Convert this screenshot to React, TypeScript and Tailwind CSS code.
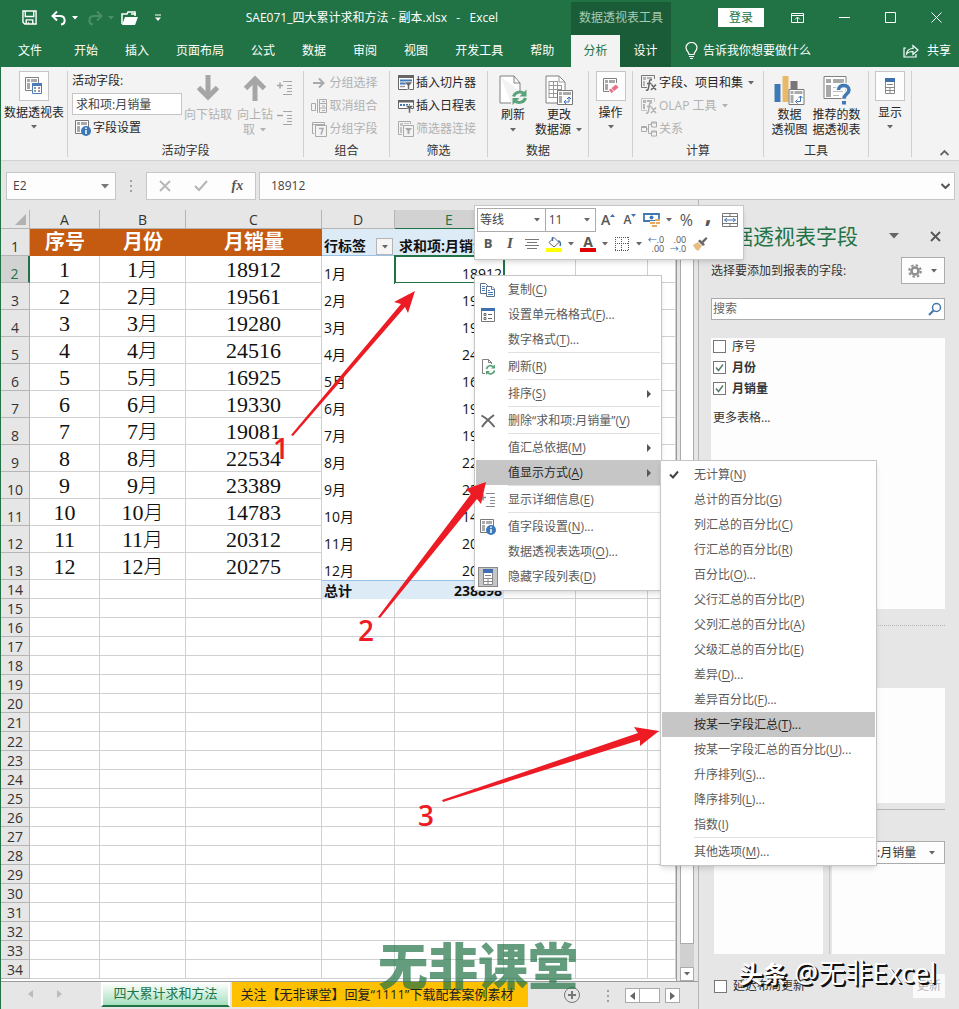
import type { ReactNode } from "react";
import { clsx } from "clsx";

type Entry = { label: string; hotkey: string; dots?: boolean; icon?: ReactNode; sub?: boolean; active?: boolean; sep?: boolean };

const tabs = ["开始", "插入", "页面布局", "公式", "数据", "审阅", "视图", "开发工具", "帮助"];

const sales = [18912, 19561, 19280, 24516, 16925, 19330, 19081, 22534, 23389, 14783, 20312, 20275];

const emptyRows = Array.from({ length: 20 }, (_, i) => i + 15);

const showAs: Entry[] = [
  { label: "无计算", hotkey: "N", icon: <TickIcon /> },
  { label: "总计的百分比", hotkey: "G" },
  { label: "列汇总的百分比", hotkey: "C" },
  { label: "行汇总的百分比", hotkey: "R" },
  { label: "百分比", hotkey: "O", dots: true },
  { label: "父行汇总的百分比", hotkey: "P" },
  { label: "父列汇总的百分比", hotkey: "A" },
  { label: "父级汇总的百分比", hotkey: "E" },
  { label: "差异", hotkey: "D", dots: true },
  { label: "差异百分比", hotkey: "F", dots: true },
  { label: "按某一字段汇总", hotkey: "T", dots: true, active: true },
  { label: "按某一字段汇总的百分比", hotkey: "U", dots: true },
  { label: "升序排列", hotkey: "S", dots: true },
  { label: "降序排列", hotkey: "L", dots: true },
  { label: "指数", hotkey: "I", sep: true },
  { label: "其他选项", hotkey: "M", dots: true },
];

const contextItems: Entry[] = [
  { label: "复制", hotkey: "C", icon: <CopyIcon /> },
  { label: "设置单元格格式", hotkey: "F", dots: true, icon: <FormatIcon /> },
  { label: "数字格式", hotkey: "T", dots: true, sep: true },
  { label: "刷新", hotkey: "R", icon: <RefreshSmallIcon />, sep: true },
  { label: "排序", hotkey: "S", sub: true, sep: true },
  { label: "删除“求和项:月销量”", hotkey: "V", icon: <DeleteIcon />, sep: true },
  { label: "值汇总依据", hotkey: "M", sub: true },
  { label: "值显示方式", hotkey: "A", sub: true, active: true, sep: true },
  { label: "显示详细信息", hotkey: "E", icon: <ExpandIcon color="#8a8a8a" sign="plus" />, sep: true },
  { label: "值字段设置", hotkey: "N", dots: true, icon: <FieldInfoIcon /> },
  { label: "数据透视表选项", hotkey: "O", dots: true },
  { label: "隐藏字段列表", hotkey: "D", icon: <ListBoxIcon /> },
];

function Caret({ className = "text-[#666]" }: { className?: string }) {
  return (
    <svg viewBox="0 0 8 4" className={clsx("h-1 w-2 shrink-0", className)}>
      <path d="M1 0h6L4 3.5z" fill="currentColor" />
    </svg>
  );
}

function TickIcon() {
  return (
    <svg viewBox="0 0 16 16" className="h-4 w-4">
      <path d="M4 7.5l3 3 5-6" fill="none" stroke="#444" strokeWidth="2" />
    </svg>
  );
}

function CopyIcon() {
  return (
    <svg viewBox="0 0 16 16" className="h-4 w-4" fill="#fff" stroke="#5b7088">
      <path d="M.5 1.5h5l2 2v8h-7z" />
      <path d="M2 4.5h3M2 6.5h3M2 8.5h3" stroke="#4a7ebb" />
      <path d="M6.5 4.5h5.500L14.500 7v7.500h-8z" />
      <path d="M11.500 4.500v3h3M8 8.500h2M8 10.500h5M8 12.500h5" stroke="#4a7ebb" />
    </svg>
  );
}

function FormatIcon() {
  return (
    <svg viewBox="0 0 16 16" className="h-4 w-4">
      <path d="M1.5 1.5h13v13h-13z" fill="#fff" stroke="#777" />
      <path d="M1 1h14v3H1z" fill="#3f6fae" />
      <path d="M4 6.5h2v2H4zM4 10.5h2v2H4z" fill="none" stroke="#666" />
      <path d="M8 7.5h4M8 11.5h4" stroke="#666" />
    </svg>
  );
}

function RefreshIcon() {
  return (
    <svg viewBox="0 0 28 30" className="h-[30px] w-7" fill="none">
      <path d="M1 1h14l6 7v8M12 28H1V1" fill="#fff" stroke="#808080" />
      <path d="M15 1v7h6" stroke="#808080" />
      <path d="M14.5 21.5a6.500 6 0 0 1 10.500-3" stroke="#5aa27c" strokeWidth="3" />
      <path d="M27.5 14.500v7h-7z" fill="#5aa27c" />
      <path d="M26.5 23a6.500 6 0 0 1-10.500 3" stroke="#5aa27c" strokeWidth="3" />
      <path d="M13.5 30v-7h7z" fill="#5aa27c" />
    </svg>
  );
}

function RefreshSmallIcon() {
  return (
    <svg viewBox="0 0 16 16" className="h-4 w-4" fill="none">
      <path d="M5 14.500H2.500V.500h6l3 3V5" stroke="#808080" />
      <path d="M8.500.500v3h3" stroke="#808080" />
      <path d="M6.500 10a4 4 0 0 1 7-2M14.500 11.500a4 4 0 0 1-7 2" stroke="#5aa27c" strokeWidth="1.800" />
      <path d="M15 5.500v4h-4zM6 16v-4h4z" fill="#5aa27c" />
    </svg>
  );
}

function DeleteIcon() {
  return (
    <svg viewBox="0 0 16 16" className="h-4 w-4">
      <path d="M1.5 2.500C6 5 11 9.500 14.500 14M14 2C10 5 5 9 2 14" fill="none" stroke="#666" strokeWidth="2" />
    </svg>
  );
}

function ExpandIcon({ color, sign }: { color: string; sign: "plus" | "minus" }) {
  return (
    <svg viewBox="0 0 16 16" className="h-4 w-4" stroke={color} fill="none">
      <path d="M6 1.5h9M10 5.5h5M10 8.5h5M10 11.5h5M6 14.5h9" />
      <path d={sign === "plus" ? "M0 5.5h6M3 2.5v6" : "M0 5.5h6"} strokeWidth="1.5" />
    </svg>
  );
}

function FieldInfoIcon() {
  return (
    <svg viewBox="0 0 16 16" className="h-4 w-4">
      <path d="M.5.5h13v13H.5z" fill="#fff" stroke="#777" />
      <path d="M2 2h3v3H2zM6 2h6v3H6zM2 6h3v6H2z" fill="#aaa" />
      <circle cx="11" cy="11" r="5" fill="#3a78b8" />
      <path d="M11 7.5V9M11 10v4" stroke="#fff" strokeWidth="1.5" />
    </svg>
  );
}

function ListIcon() {
  return (
    <svg viewBox="0 0 10 16" className="h-4 w-[10px]">
      <path d="M.5.5h9v15h-9z" fill="#fff" stroke="#888" />
      <path d="M0 0h10v4H0z" fill="#3f6fae" />
      <path d="M2 6.5h6M.5 9.5h9M.5 12.5h9M5 9.5v6" stroke="#888" />
    </svg>
  );
}

function ListBoxIcon() {
  return (
    <span className="flex h-5 w-5 shrink-0 items-center justify-center border border-[#8a8a8a] bg-[#c6c6c6]">
      <ListIcon />
    </span>
  );
}

function PivotIcon() {
  return (
    <svg viewBox="0 0 18 18" className="h-[18px] w-[18px]">
      <path d="M.5.5h13v13H.5z" fill="#fff" stroke="#808080" />
      <path d="M2 2h3v3H2zM6 2h6v3H6zM2 6h3v6H2z" fill="#a8a8a8" />
      <path d="M7.5 6.5h9v10h-9z" fill="#fff" stroke="#4a7ebb" />
      <path d="M7 6h10v3H7z" fill="#4a7ebb" />
      <path d="M9 11h2M13 11h2M9 14h2M13 14h2" stroke="#777" strokeWidth="1.5" />
    </svg>
  );
}

function EraseIcon() {
  return (
    <svg viewBox="0 0 18 18" className="h-[18px] w-[18px]">
      <path d="M14.5 6V1.5h-13v13H7" fill="#fff" stroke="#808080" />
      <path d="M3 3h3v3H3zM7 3h6v3H7zM3 7h3v6H3z" fill="#a8a8a8" />
      <path d="M6.5 13L14 7l3 3.5-7.5 6z" fill="#e8718a" stroke="#fff" strokeWidth=".8" />
      <path d="M9 11l3 3.5" stroke="#fff" strokeWidth=".8" />
    </svg>
  );
}

function BigArrow({ down }: { down?: boolean }) {
  return (
    <svg viewBox="0 0 22 26" className="h-[26px] w-[22px]" fill="none" stroke="#a6a6a6">
      {down ? (
        <>
          <path d="M11 0v22" strokeWidth="5" />
          <path d="M1.5 12.5L11 22l9.5-9.5" strokeWidth="5" />
        </>
      ) : (
        <>
          <path d="M11 4v22" strokeWidth="5" />
          <path d="M1.5 13.5L11 4l9.5 9.5" strokeWidth="5" />
        </>
      )}
    </svg>
  );
}

function SourceIcon() {
  return (
    <svg viewBox="0 0 28 30" className="h-[30px] w-7" fill="none">
      <path d="M1 1h13l6 6v21H1z" fill="#fff" stroke="#808080" />
      <path d="M14 1v6h6M4 6.5h8M4 10.5h13M4 14.5h13M4 18.5h9M4 22.5h8M4 6v17M8.5 6v17M12.5 6v17M16.5 10v5" stroke="#999" />
      <path d="M12.5 15.5h15v14h-15z" fill="#fff" stroke="#777" />
      <path d="M14 17h3v3h-3zM18 17h8v3h-8zM14 21h3v7h-3z" fill="#aaa" />
      <path d="M20 27h4v-5M22 24l2-2 2 2M21 25l-2 2 2 2" stroke="#3f6fae" />
    </svg>
  );
}

function ChartIcon() {
  return (
    <svg viewBox="0 0 31 30" className="h-[30px] w-8" fill="none">
      <path d="M1 9h6v18H1z" fill="#3f78b5" />
      <path d="M9 1h6v26H9z" fill="#e9b968" />
      <path d="M17 6h7v8h-7z" fill="#777" />
      <path d="M15.5 14.5h15v15h-15z" fill="#fff" stroke="#777" />
      <path d="M17 16h3v3h-3zM21 16h8v3h-8zM17 20h3v8h-3z" fill="#aaa" />
      <path d="M23 26.5h4V21M25 23l2-2 2 2M24 24.5l-2 2 2 2" stroke="#3f6fae" />
    </svg>
  );
}

function RecommendIcon() {
  return (
    <svg viewBox="0 0 28 30" className="h-[30px] w-7" fill="none">
      <path d="M1 1.5h22v22H1z" fill="#fff" stroke="#808080" />
      <path d="M3 4h5v4H3zM10 4h11v4H10zM3 10h5v12H3z" fill="#a8a8a8" />
      <path d="M10 12.5h10M10 16.5h10M10 20.5h6" stroke="#bbb" />
      <path d="M15.5 15c0-6 10.5-6 10.5 0 0 4-5 4-5 8.5" stroke="#f3f3f3" strokeWidth="6" />
      <path d="M15.5 15c0-6 10.5-6 10.5 0 0 4-5 4-5 8.5" stroke="#3f78b5" strokeWidth="3.5" />
      <path d="M19 26h4v3.5h-4z" fill="#3f78b5" />
    </svg>
  );
}

function GroupArrowIcon() {
  return (
    <svg viewBox="0 0 16 16" className="h-4 w-4" fill="none" stroke="#aaa">
      <path d="M2 8h10M8 3.5L12.5 8 8 12.5" strokeWidth="2" />
    </svg>
  );
}

function UngroupIcon() {
  return (
    <svg viewBox="0 0 16 16" className="h-4 w-4" fill="none" stroke="#aaa">
      <path d="M.5 5.5h4v7h-4zM8.5 1.5h7v13h-7zM8.5 5.5h7M8.5 10h7M11 3.5h3M11 8h3M11 12.5h3M6.5 1v14" />
    </svg>
  );
}

function GroupFieldIcon() {
  return (
    <svg viewBox="0 0 16 16" className="h-4 w-4" fill="none" stroke="#aaa">
      <path d="M3 12.5H1.5v-11h12V4M1 3.5h12" />
      <path d="M4.5 4.5h11v11h-11z" fill="#f3f3f3" />
      <path d="M8 7.5h4l-2 6" strokeWidth="1.5" />
    </svg>
  );
}

function SlicerIcon() {
  return (
    <svg viewBox="0 0 16 16" className="h-4 w-4">
      <path d="M.5.5h15v14H.5z" fill="#fff" stroke="#666" />
      <path d="M0 0h16v3H0z" fill="#666" />
      <path d="M2 5.5h12M2 8.5h6" stroke="#3f78b5" strokeWidth="2" />
      <path d="M2 11.5h5" stroke="#999" strokeWidth="1.5" />
      <path d="M6.5 7h8l-3 3.5v4h-2v-4z" fill="#666" stroke="#fff" strokeWidth=".5" />
    </svg>
  );
}

function TimelineIcon() {
  return (
    <svg viewBox="0 0 16 16" className="h-4 w-4">
      <path d="M.5 2.5h15v8H.5z" fill="#fff" stroke="#666" />
      <path d="M0 2h16v2.5H0z" fill="#666" />
      <path d="M2 7h10" stroke="#3f78b5" strokeWidth="2" strokeDasharray="2 1" />
      <path d="M7.5 7.5h8l-3 3.5v4h-2v-4z" fill="#666" stroke="#f3f3f3" strokeWidth=".5" />
    </svg>
  );
}

function FilterLinkIcon() {
  return (
    <svg viewBox="0 0 16 16" className="h-4 w-4" fill="none" stroke="#aaa">
      <path d="M4 13.5H.5V.5h12V3" />
      <path d="M2 2h3v3H2zM6 2h5v1H6zM2 6h2v6H2z" fill="#c4c4c4" stroke="none" />
      <path d="M5.5 4.5h10v11h-10z" fill="#f3f3f3" />
      <path d="M7 7h7l-2.5 3v3h-2v-3z" fill="#aaa" stroke="none" />
    </svg>
  );
}

function FxIcon({ dim }: { dim?: boolean }) {
  return (
    <svg viewBox="0 0 16 16" className="h-4 w-4" fill="none" stroke={dim ? "#b0b0b0" : "#666"}>
      <path d="M6 12.5H.5V.5h13V4" stroke={dim ? "#c4c4c4" : "#777"} />
      <path d="M2 2h3v3H2zM6 2h5v2H6zM2 6h2v5H2z" fill="#b5b5b5" stroke="none" />
      <path d="M11 5c-3-1-2.5 2-3 5s-.5 6-3 5M6 8.5h4.5M10.5 9.5L15 15M15 9.5L10 15" strokeWidth="1.5" />
    </svg>
  );
}

function RelationIcon() {
  return (
    <svg viewBox="0 0 16 16" className="h-4 w-4" fill="none" stroke="#aaa">
      <path d="M.5 5.5h5v5h-5zM10.5 1h5v5h-5zM10.5 10h5v5h-5zM5.5 8h2M10.5 3.5h-3v9h3" />
      <path d="M.5 6.5h5M10.5 2h5M10.5 11h5" />
    </svg>
  );
}

function RibbonGroup({ label, className, children }: { label?: string; className: string; children: ReactNode }) {
  return (
    <section className={clsx("flex h-[86px] shrink-0 flex-col border-r border-[#d0d0d0]", className)}>
      <div className="flex h-[72px] justify-center">{children}</div>
      <h2 className="h-[14px] text-center leading-4 text-[#333]">{label}</h2>
    </section>
  );
}

function BoxedButton({ label, icon }: { label: string; icon: ReactNode }) {
  return (
    <button className="flex flex-col items-center whitespace-nowrap">
      <span className="flex h-[30px] w-[30px] items-center justify-center border border-[#c6c6c6] bg-[#fdfdfd]">{icon}</span>
      <span className="mt-1 leading-4">{label}</span>
      <Caret className="mt-1 text-[#666]" />
    </button>
  );
}

function LineButton({ label, icon, dim, caret }: { label: string; icon: ReactNode; dim?: boolean; caret?: boolean }) {
  return (
    <button className={clsx("flex h-[23px] items-center gap-[2px] whitespace-nowrap", dim ? "text-[#b1b1b1]" : "text-[#262626]")}>
      {icon}
      {label}
      {caret && <Caret className={dim ? "ml-[2px] text-[#b1b1b1]" : "ml-[2px] text-[#666]"} />}
    </button>
  );
}

function TallButton({ lines, icon, dim, caret, below }: { lines: string[]; icon: ReactNode; dim?: boolean; caret?: boolean; below?: boolean }) {
  return (
    <button className={clsx("flex flex-col items-center whitespace-nowrap pt-1", dim && "text-[#b1b1b1]")}>
      <span className="flex h-8 items-start">{icon}</span>
      {lines.map((line, i) => (
        <span key={line} className="flex items-center gap-1 leading-[15px]">
          {line}
          {caret && i === lines.length - 1 && <Caret className={dim ? "text-[#b1b1b1]" : "text-[#666]"} />}
        </span>
      ))}
      {below && <Caret className="mt-[6px] text-[#666]" />}
    </button>
  );
}

function Header() {
  return (
    <header className="flex h-[67px] shrink-0 bg-[#217346] text-white">
      <div className="flex w-[571px] shrink-0 flex-col">
        <div className="flex h-[35px] items-center pl-[22px]">
          <button aria-label="保存">
            <svg viewBox="0 0 16 16" className="h-[15px] w-[15px]" fill="none" stroke="#fff" strokeWidth="1.5">
              <path d="M1 1h14v14H3l-2-2zM3.5 1v6h9V1M4.5 15v-4.5h7V15M7 13v2" />
            </svg>
          </button>
          <button aria-label="撤消" className="ml-[14px] flex items-center gap-1">
            <svg viewBox="0 0 16 16" className="h-4 w-4" fill="none" stroke="#fff" strokeWidth="2">
              <path d="M6 1.5L1.5 6 6 10.5M2 6h7c6 0 6 8 1 8.5" />
            </svg>
            <Caret className="text-white" />
          </button>
          <button aria-label="恢复" className="ml-2 flex items-center gap-1 text-[#4a8f69]">
            <svg viewBox="0 0 16 16" className="h-4 w-4" fill="none" stroke="currentColor" strokeWidth="2">
              <path d="M10 1.5L14.5 6 10 10.5M14 6H7c-6 0-6 8-1 8.5" />
            </svg>
            <Caret className="text-[#4a8f69]" />
          </button>
          <button aria-label="打开" className="ml-[6px]">
            <svg viewBox="0 0 17 16" className="h-4 w-[17px]">
              <path d="M1 14V4h5l1-2h7v4M10 4h5" fill="none" stroke="#fff" strokeWidth="1.5" />
              <path d="M1 15l3-8h13l-3 8z" fill="#fff" />
            </svg>
          </button>
          <button aria-label="自定义快速访问工具栏" className="ml-4">
            <svg viewBox="0 0 8 8" className="h-2 w-2">
              <path d="M1 1h6" stroke="#fff" />
              <path d="M1 3.5h6L4 7z" fill="#fff" />
            </svg>
          </button>
          <h1 className="mr-[73px] ml-auto whitespace-pre">SAE071_四大累计求和方法 - 副本.xlsx   -   Excel</h1>
        </div>
        <nav className="flex h-8 items-center gap-[27px] pl-[18px]">
          <button className="mr-[5px]">文件</button>
          {tabs.map((tab) => (
            <button key={tab} className="whitespace-nowrap">{tab}</button>
          ))}
        </nav>
      </div>
      <div className="flex w-[100px] shrink-0 flex-col border-t-2 border-[#217346] bg-[#1a5c38]">
        <p className="h-[33px] text-center leading-[32px] text-[#a5cbb5]">数据透视表工具</p>
        <nav className="flex h-8">
          <button className="w-[49px] bg-[#f3f3f3] text-[#217346]">分析</button>
          <button className="flex-1">设计</button>
        </nav>
      </div>
      <div className="flex min-w-0 flex-1 flex-col">
        <div className="flex h-[35px] items-center justify-end pr-[17px]">
          <button className="mr-[27px] h-[19px] w-[46px] bg-white text-[#217346]">登录</button>
          <button aria-label="功能区显示选项" className="mr-[35px]">
            <svg viewBox="0 0 13 12" className="h-3 w-[13px]" fill="none" stroke="#fff">
              <path d="M.5 1.5h12v9H.5zM.5 3.5h12M6.5 10V5.5M4 7.5L6.5 5 9 7.5" />
            </svg>
          </button>
          <button aria-label="最小化" className="mr-[35px]">
            <svg viewBox="0 0 11 11" className="h-[11px] w-[11px]" stroke="#fff"><path d="M0 5.5h11" /></svg>
          </button>
          <button aria-label="最大化" className="mr-[35px]">
            <svg viewBox="0 0 11 11" className="h-[11px] w-[11px]" fill="none" stroke="#fff"><path d="M.5.5h10v10H.5z" /></svg>
          </button>
          <button aria-label="关闭">
            <svg viewBox="0 0 11 11" className="h-[11px] w-[11px]" stroke="#fff"><path d="M.5.5l10 10M10.5.5l-10 10" /></svg>
          </button>
        </div>
        <div className="flex h-8 items-center justify-between pr-2 pl-[14px]">
          <button className="flex items-center gap-[5px] whitespace-nowrap">
            <svg viewBox="0 0 13 18" className="h-[18px] w-[13px]" fill="none" stroke="#fff" strokeWidth="1.2">
              <path d="M4 12.5c0-2.5-3-3.5-3-7a5.5 5 0 0 1 11 0c0 3.5-3 4.5-3 7zM4 14.5h5M5 16.5h3" />
            </svg>
            告诉我你想要做什么
          </button>
          <button className="flex items-center gap-2">
            <svg viewBox="0 0 16 14" className="h-[14px] w-4" fill="none" stroke="#fff" strokeWidth="1.2">
              <path d="M3 4H1v9h12v-3M3.5 10c.5-4 3-5.5 6.5-5.5v-3L15 6l-5 4.5v-3C7 7.5 5 8 3.5 10z" />
            </svg>
            共享
          </button>
        </div>
      </div>
    </header>
  );
}

function Ribbon() {
  return (
    <div className="flex h-[94px] shrink-0 border-b border-[#d2d2d2] bg-[#f3f3f3] pt-1 text-[#262626]">
      <RibbonGroup className="w-[67px]">
        <BoxedButton label="数据透视表" icon={<PivotIcon />} />
      </RibbonGroup>
      <RibbonGroup label="活动字段" className="w-[236px]">
        <div className="flex w-[110px] flex-col">
          <label htmlFor="active-field" className="h-[22px] leading-5">活动字段:</label>
          <input id="active-field" defaultValue="求和项:月销量" className="h-[22px] w-full border border-[#c6c6c6] bg-white px-[3px] text-[#444]" />
          <div className="pt-px pl-[3px]">
            <LineButton label="字段设置" icon={<FieldInfoIcon />} />
          </div>
        </div>
        <div className="flex gap-[5px] pl-[2px]">
          <TallButton dim lines={["向下钻取"]} icon={<BigArrow down />} />
          <TallButton dim caret lines={["向上钻", "取"]} icon={<BigArrow />} />
        </div>
        <div className="flex flex-col gap-[14px] pt-[9px] pr-[6px] pl-1">
          <button aria-label="展开字段"><ExpandIcon color="#a6a6a6" sign="plus" /></button>
          <button aria-label="折叠字段"><ExpandIcon color="#a6a6a6" sign="minus" /></button>
        </div>
      </RibbonGroup>
      <RibbonGroup label="组合" className="w-[86px]">
        <div className="pr-1">
          <LineButton dim label="分组选择" icon={<GroupArrowIcon />} />
          <LineButton dim label="取消组合" icon={<UngroupIcon />} />
          <LineButton dim label="分组字段" icon={<GroupFieldIcon />} />
        </div>
      </RibbonGroup>
      <RibbonGroup label="筛选" className="w-[98px]">
        <div className="pr-[3px]">
          <LineButton label="插入切片器" icon={<SlicerIcon />} />
          <LineButton label="插入日程表" icon={<TimelineIcon />} />
          <LineButton dim label="筛选器连接" icon={<FilterLinkIcon />} />
        </div>
      </RibbonGroup>
      <RibbonGroup label="数据" className="w-[101px]">
        <div className="flex gap-2 pl-[6px]">
          <TallButton below lines={["刷新"]} icon={<RefreshIcon />} />
          <TallButton caret lines={["更改", "数据源"]} icon={<SourceIcon />} />
        </div>
      </RibbonGroup>
      <RibbonGroup className="w-11">
        <BoxedButton label="操作" icon={<EraseIcon />} />
      </RibbonGroup>
      <RibbonGroup label="计算" className="w-[131px]">
        <div>
          <LineButton caret label="字段、项目和集" icon={<FxIcon />} />
          <LineButton dim caret label="OLAP 工具" icon={<FxIcon dim />} />
          <LineButton dim label="关系" icon={<RelationIcon />} />
        </div>
      </RibbonGroup>
      <RibbonGroup label="工具" className="w-[105px]">
        <div className="flex gap-[5px]">
          <TallButton lines={["数据", "透视图"]} icon={<ChartIcon />} />
          <TallButton lines={["推荐的数", "据透视表"]} icon={<RecommendIcon />} />
        </div>
      </RibbonGroup>
      <RibbonGroup className="w-[43px]">
        <BoxedButton label="显示" icon={<ListIcon />} />
      </RibbonGroup>
      <div className="flex flex-1 items-end justify-end pr-[10px] pb-1">
        <button aria-label="折叠功能区">
          <svg viewBox="0 0 9 6" className="h-[6px] w-[9px]" fill="none" stroke="#666" strokeWidth="1.8"><path d="M.5 5l4-4 4 4" /></svg>
        </button>
      </div>
    </div>
  );
}

function FormulaBar() {
  return (
    <div className="flex h-[39px] shrink-0 items-end pr-1 pl-[5px] text-[#444]">
      <div className="flex h-7 w-[110px] items-center border border-[#c6c6c6] bg-[#fdfdfd] px-[6px]">
        <input aria-label="名称框" defaultValue="E2" className="w-0 min-w-0 flex-1 bg-transparent" />
        <button aria-label="名称列表">
          <svg viewBox="0 0 8 5" className="h-[5px] w-2"><path d="M0 0h8L4 4.5z" fill="#777" /></svg>
        </button>
      </div>
      <div className="flex h-7 w-[30px] flex-col items-center justify-center gap-[3px]">
        <i className="h-[2px] w-[2px] bg-[#a0a0a0]" />
        <i className="h-[2px] w-[2px] bg-[#a0a0a0]" />
        <i className="h-[2px] w-[2px] bg-[#a0a0a0]" />
      </div>
      <div className="flex h-7 w-[110px] items-center justify-around border border-[#c6c6c6] bg-[#fdfdfd]">
        <button aria-label="取消">
          <svg viewBox="0 0 12 12" className="h-3 w-3" stroke="#b5b5b5" strokeWidth="1.8"><path d="M1 1l10 10M11 1L1 11" /></svg>
        </button>
        <button aria-label="输入">
          <svg viewBox="0 0 14 12" className="h-3 w-[14px]" fill="none" stroke="#b5b5b5" strokeWidth="2"><path d="M1 6l4 4 8-9" /></svg>
        </button>
        <button className="font-['Liberation_Serif',serif] text-sm font-bold italic leading-4 text-[#555]">fx</button>
      </div>
      <div className="ml-[3px] flex h-7 flex-1 items-center border border-[#c6c6c6] bg-[#fdfdfd] pr-1 pl-[11px]">
        <input aria-label="编辑栏" defaultValue="18912" className="min-w-0 flex-1 bg-transparent" />
        <button aria-label="展开编辑栏">
          <svg viewBox="0 0 9 6" className="h-[6px] w-[9px]" fill="none" stroke="#555" strokeWidth="2"><path d="M.5 1l4 4 4-4" /></svg>
        </button>
      </div>
    </div>
  );
}

const rowHead = "border-r border-b border-[#b5b5b5] bg-[#e6e6e6] p-0 align-bottom text-center text-sm leading-[17px] font-normal text-[#333]";
const cell = "border-r border-b border-[#d0d0d0] bg-white px-0 pb-0";
const listCell = "pt-[2px] text-center align-middle font-['Liberation_Serif','Noto_Sans_CJK_SC',serif] text-[22px] leading-6 text-[#111]";
const titleCell = "bg-[#c55a11] px-0 pt-0 pb-px text-center align-middle text-[20px] leading-6 font-semibold text-white";
const pivotCell = "bg-white px-[2px] pt-0 pb-px align-bottom text-sm leading-[17px] text-[#111]";

function Rest() {
  return (
    <>
      <td className={cell} />
      <td className={cell} />
      <td className={cell} />
    </>
  );
}

function Sheet() {
  return (
    <div className="min-w-0 flex-1 overflow-hidden border-r border-[#9b9b9b] bg-white">
      <table className="w-full table-fixed border-separate border-spacing-0">
        <colgroup>
          <col className="w-[29px]" />
          <col className="w-[70px]" />
          <col className="w-[86px]" />
          <col className="w-[136px]" />
          <col className="w-[73px]" />
          <col className="w-[109px]" />
          <col className="w-[72px]" />
          <col className="w-[72px]" />
          <col />
        </colgroup>
        <thead>
          <tr className="h-[19px]">
            <th className="border-r border-b border-[#b5b5b5] bg-[#e6e6e6] p-0">
              <svg viewBox="0 0 11 11" className="mr-[3px] ml-auto h-[11px] w-[11px]"><path d="M11 0v11H0z" fill="#b2b2b2" /></svg>
            </th>
            {["A", "B", "C", "D", "E", "F", "G", ""].map((name) => (
              <th
                key={name}
                className={clsx(
                  "border-r border-b p-0 text-sm leading-[17px] font-normal",
                  name === "E" ? "border-r-[#b5b5b5] border-b-[#217346] bg-[#d2d2d2] text-[#217346]" : "border-[#b5b5b5] bg-[#e6e6e6] text-[#333]",
                )}
              >
                {name}
              </th>
            ))}
          </tr>
        </thead>
        <tbody>
          <tr className="h-[27px]">
            <th className={rowHead}>1</th>
            <td className={titleCell}>序号</td>
            <td className={titleCell}>月份</td>
            <td className={titleCell}>月销量</td>
            <td className="border-b border-[#9bc2e6] bg-[#ddebf7] px-[2px] py-0 align-bottom text-sm leading-[18px] font-bold text-[#111]">
              <div className="flex items-end justify-between whitespace-nowrap">
                行标签
                <button aria-label="筛选行标签" className="flex h-[17px] w-[17px] shrink-0 items-center justify-center border border-[#b5b5b5] bg-[#f5f5f5]"><Caret /></button>
              </div>
            </td>
            <td className="overflow-hidden border-b border-[#9bc2e6] bg-[#ddebf7] px-1 py-0 align-bottom text-sm leading-[18px] font-bold whitespace-nowrap text-[#111]">求和项:月销量</td>
            <Rest />
          </tr>
          {sales.map((value, i) => (
            <tr key={i} className="h-[27px]">
              <th className={i === 0 ? "border-r-2 border-b border-r-[#217346] border-b-[#b5b5b5] bg-[#d2d2d2] p-0 align-bottom text-sm leading-[17px] font-normal text-[#217346]" : rowHead}>{i + 2}</th>
              <td className={clsx(cell, listCell)}>{i + 1}</td>
              <td className={clsx(cell, listCell)}>{i + 1}<span className="text-[20px] font-light">月</span></td>
              <td className={clsx(cell, listCell)}>{value}</td>
              <td className={pivotCell}>{i + 1}月</td>
              <td className={clsx(pivotCell, "relative text-right")}>
                {value}
                {i === 0 && <span className="absolute -inset-px border-2 border-[#217346]" />}
              </td>
              <Rest />
            </tr>
          ))}
          <tr className="h-[19px]">
            <th className={rowHead}>14</th>
            <td className={cell} />
            <td className={cell} />
            <td className={cell} />
            <td className="border-t border-[#9bc2e6] bg-[#ddebf7] px-[2px] py-0 text-sm leading-[17px] font-bold text-[#111]">总计</td>
            <td className="border-t border-[#9bc2e6] bg-[#ddebf7] px-[2px] py-0 text-right text-sm leading-[17px] font-bold text-[#111]">238898</td>
            <Rest />
          </tr>
          {emptyRows.map((n) => (
            <tr key={n} className="h-[19px]">
              <th className={rowHead}>{n}</th>
              <td className={cell} />
              <td className={cell} />
              <td className={cell} />
              <td className={cell} />
              <td className={cell} />
              <Rest />
            </tr>
          ))}
        </tbody>
      </table>
    </div>
  );
}

function SheetTabs() {
  return (
    <footer className="flex h-7 shrink-0 items-start border-t border-[#9b9b9b] pr-[18px]">
      <div className="flex w-[100px] shrink-0 items-center justify-center gap-6 pt-2 pr-3">
        <svg viewBox="0 0 5 8" className="h-2 w-[5px]"><path d="M5 0v8L0 4z" fill="#bbb" /></svg>
        <svg viewBox="0 0 5 8" className="h-2 w-[5px]"><path d="M0 0v8l5-4z" fill="#bbb" /></svg>
      </div>
      <button className="h-[25px] w-[129px] shrink-0 border-x-2 border-b-2 border-x-white border-b-[#217346] bg-linear-to-b from-white to-[#a5e0bf] text-[13px] text-[#217346]">四大累计求和方法</button>
      <button className="ml-[2px] h-[25px] w-[296px] shrink-0 bg-[#ffc000] pr-[6px] text-[13px] whitespace-nowrap text-[#222]">关注【无非课堂】回复“1111”下载配套案例素材</button>
      <button aria-label="新工作表" className="mt-[5px] ml-9 shrink-0">
        <svg viewBox="0 0 16 16" className="h-4 w-4" fill="none" stroke="#777"><circle cx="8" cy="8" r="7.5" /><path d="M4 8h8M8 4v8" strokeWidth="2" /></svg>
      </button>
      <div className="mt-2 mr-4 ml-auto flex flex-col gap-[3px]">
        <i className="h-[2px] w-[2px] bg-[#a0a0a0]" />
        <i className="h-[2px] w-[2px] bg-[#a0a0a0]" />
        <i className="h-[2px] w-[2px] bg-[#a0a0a0]" />
      </div>
      <div className="mt-[6px] flex h-[15px] shrink-0">
        <button aria-label="向左滚动" className="flex w-[15px] items-center justify-center border border-[#aaa] bg-white">
          <svg viewBox="0 0 5 8" className="h-2 w-[5px]"><path d="M5 0v8L0 4z" fill="#666" /></svg>
        </button>
        <span className="w-5 border-y border-r border-[#aaa] bg-white" />
        <button aria-label="向右滚动" className="ml-[5px] flex w-[15px] items-center justify-center border border-[#aaa] bg-white">
          <svg viewBox="0 0 5 8" className="h-2 w-[5px]"><path d="M0 0v8l5-4z" fill="#666" /></svg>
        </button>
      </div>
    </footer>
  );
}

function FieldCheck({ id, label, checked }: { id: string; label: string; checked?: boolean }) {
  return (
    <div className="flex h-[21px] items-center gap-[6px]">
      <span className="relative flex h-[13px] w-[13px]">
        <input id={id} type="checkbox" defaultChecked={checked} className="peer h-[13px] w-[13px] appearance-none border border-[#777] bg-white" />
        <svg viewBox="0 0 13 13" className="pointer-events-none absolute inset-0 hidden peer-checked:block" fill="none" stroke="#5c7a68" strokeWidth="1.5">
          <path d="M3 6.5l2.5 3L10 3.5" />
        </svg>
      </span>
      <label htmlFor={id} className={checked ? "font-bold" : undefined}>{label}</label>
    </div>
  );
}

function FieldPane() {
  return (
    <aside className="flex w-[261px] shrink-0 flex-col border-l border-[#b5b5b5] pt-5 pr-[14px] pl-3 text-[#333]">
      <div className="flex h-8 items-center">
        <h2 className="text-[21px] leading-8 whitespace-nowrap text-[#217346]">数据透视表字段</h2>
        <button aria-label="任务窗格选项" className="ml-auto">
          <svg viewBox="0 0 10 6" className="h-[6px] w-[10px]"><path d="M0 0h10L5 5.5z" fill="#666" /></svg>
        </button>
        <button aria-label="关闭窗格" className="mr-1 ml-[31px]">
          <svg viewBox="0 0 11 11" className="h-[11px] w-[11px]" stroke="#555" strokeWidth="1.8"><path d="M1 1l9 9M10 1l-9 9" /></svg>
        </button>
      </div>
      <div className="mt-[5px] flex h-[27px] items-center justify-between">
        <p>选择要添加到报表的字段:</p>
        <button aria-label="工具" className="flex h-[27px] w-11 items-center justify-center gap-2 border border-[#ababab] bg-[#fdfdfd]">
          <svg viewBox="0 0 14 14" className="h-[14px] w-[14px]" fill="none" stroke="#8c8c8c">
            <circle cx="7" cy="7" r="3.5" strokeWidth="2.5" />
            <circle cx="7" cy="7" r="5.8" strokeWidth="2" strokeDasharray="2.4 2.15" />
          </svg>
          <Caret />
        </button>
      </div>
      <div className="mt-[14px] flex h-[22px] items-center border border-[#ababab] bg-white pr-[2px] pl-[1px]">
        <input aria-label="搜索" placeholder="搜索" className="min-w-0 flex-1 placeholder:text-[#666]" />
        <svg viewBox="0 0 14 14" className="h-[14px] w-[14px]" fill="none" stroke="#4478a8" strokeWidth="1.5">
          <circle cx="8.5" cy="5.5" r="4" />
          <path d="M5.5 8.5L1 13" strokeWidth="2.2" />
        </svg>
      </div>
      <div className="mt-[18px] h-[271px] bg-[#fdfdfd] px-[2px]">
        <div className="-mt-[2px]">
          <FieldCheck id="field-no" label="序号" />
          <FieldCheck id="field-month" label="月份" checked />
          <FieldCheck id="field-sales" label="月销量" checked />
        </div>
        <a href="#tables" className="mt-[9px] block leading-5">更多表格...</a>
      </div>
      <div className="mt-4 border-t border-dotted border-[#b5b5b5]" />
      <div className="mt-[62px] flex h-[115px] gap-2 pl-[3px]">
        <div className="flex-1 bg-[#fdfdfd]" />
        <div className="flex-1 bg-[#fdfdfd]" />
      </div>
      <div className="mt-[6px] ml-[3px] border-t border-[#b5b5b5]" />
      <div className="mt-[31px] flex h-[113px] pl-[3px]">
        <div className="w-[109px] bg-[#fdfdfd]" />
        <div className="mr-[2px] ml-[6px] border-l border-[#c6c6c6]" />
        <div className="flex-1 bg-[#fdfdfd]">
          <button className="flex h-[23px] w-full items-center justify-between border border-[#ababab] bg-[#fdfdfd] pr-2 pl-2 whitespace-nowrap">
            求和项:月销量
            <Caret />
          </button>
        </div>
      </div>
      <div className="mt-5 flex h-6 items-center justify-between pl-[3px]">
        <FieldCheck id="defer-layout" label="延迟布局更新" />
        <button className="h-6 w-8 bg-[#fafafa] text-[#b5b5b5]">更新</button>
      </div>
    </aside>
  );
}

function MenuList({ items }: { items: Entry[] }) {
  return (
    <ul>
      {items.map((item) => (
        <li key={item.label}>
          <button className={clsx("flex h-[25px] w-full items-center whitespace-nowrap", item.active ? "bg-[#c6c6c6] text-[#262626]" : "text-[#5a5a5a]")}>
            <span className="flex w-8 shrink-0 items-center justify-center pr-2">{item.icon}</span>
            <span>
              {item.label}(<u className="underline-offset-2">{item.hotkey}</u>){item.dots && "..."}
            </span>
            {item.sub && (
              <svg viewBox="0 0 4 8" className="mr-[9px] ml-auto h-2 w-1"><path d="M0 0v8l4-4z" fill="#555" /></svg>
            )}
          </button>
          {item.sep && <div className="mb-px ml-8 h-px bg-[#e0e0e0]" />}
        </li>
      ))}
    </ul>
  );
}

function ToolButton({ label, children }: { label: string; children: ReactNode }) {
  return (
    <button aria-label={label} className="flex h-6 w-[22px] items-center justify-center text-[#555]">
      {children}
    </button>
  );
}

function ToolCaret() {
  return (
    <span className="flex w-3 justify-center">
      <Caret />
    </span>
  );
}

function MiniToolbar() {
  return (
    <div className="absolute top-[205px] left-[474px] w-[270px] border border-[#c6c6c6] bg-white px-[2px] pt-[2px] pb-[3px] shadow-md">
      <div className="flex h-6 items-center">
        <span className="relative flex h-6 w-[69px] items-center border border-[#ababab]">
          <select aria-label="字体" className="h-full w-full appearance-none pl-[2px] text-[#444]"><option>等线</option></select>
          <Caret className="pointer-events-none absolute right-1 text-[#666]" />
        </span>
        <span className="relative flex h-6 w-[50px] items-center border-y border-r border-[#ababab]">
          <select aria-label="字号" className="h-full w-full appearance-none pl-[3px] text-[#444]"><option>11</option></select>
          <Caret className="pointer-events-none absolute right-1 text-[#666]" />
        </span>
        <span className="w-[2px]" />
        <ToolButton label="增大字号"><span className="text-sm font-semibold">A</span><svg viewBox="0 0 6 12" className="h-3 w-[6px]"><path d="M0 3h5L2.5 0z" fill="#3f6fae" /></svg></ToolButton>
        <ToolButton label="减小字号"><span className="font-semibold">A</span><svg viewBox="0 0 6 12" className="h-3 w-[6px]"><path d="M0 0h5L2.5 3z" fill="#3f6fae" /></svg></ToolButton>
        <ToolButton label="会计数字格式">
          <svg viewBox="0 0 18 16" className="h-4 w-[18px]" fill="none">
            <path d="M1 2h15v7H1z" stroke="#3f78b5" strokeWidth="1.8" />
            <circle cx="8.5" cy="5.5" r="2" fill="#3f78b5" />
            <path d="M7 9h11v7H7z" fill="#fff" />
            <path d="M7 11h5M9 14h5M12 8h5M13 11h4" stroke="#e9a860" strokeWidth="2" />
          </svg>
        </ToolButton>
        <ToolCaret />
        <ToolButton label="百分比样式"><span className="text-base">%</span></ToolButton>
        <ToolButton label="千位分隔样式"><span className="pb-3 text-2xl leading-3 font-bold">,</span></ToolButton>
        <ToolButton label="合并后居中">
          <svg viewBox="0 0 16 16" className="h-4 w-4" fill="none" stroke="#777">
            <path d="M.5 1.5h15v13H.5zM.5 4.5h15M.5 11.5h15M8 1v3.5M8 11.5V15" />
            <path d="M2.5 8h11M5 6L2.5 8 5 10M11 6l2.5 2-2.5 2" stroke="#3f6fae" />
          </svg>
        </ToolButton>
      </div>
      <div className="flex h-6 items-center">
        <ToolButton label="加粗"><b className="text-[13px]">B</b></ToolButton>
        <ToolButton label="倾斜"><em className="font-['Liberation_Serif',serif] text-[15px] font-bold">I</em></ToolButton>
        <ToolButton label="居中">
          <svg viewBox="0 0 14 12" className="h-3 w-[14px]" stroke="#777"><path d="M0 1.5h14M2 4.5h10M0 7.5h14M2 10.5h10" /></svg>
        </ToolButton>
        <ToolButton label="填充颜色">
          <svg viewBox="0 0 16 16" className="h-4 w-4" fill="none">
            <path d="M3 6.5l5-5 5 5L8 11z" fill="#fff" stroke="#666" />
            <path d="M6.5 5V1M12 5c2.5 0 3 3 2 5" stroke="#3f6fae" strokeWidth="1.5" />
            <path d="M0 12h16v4H0z" fill="#ff0" />
          </svg>
        </ToolButton>
        <ToolCaret />
        <ToolButton label="字体颜色">
          <span className="flex w-4 flex-col items-center border-b-4 border-[#e00000] text-sm leading-3 font-bold">A</span>
        </ToolButton>
        <ToolCaret />
        <ToolButton label="边框">
          <svg viewBox="0 0 14 14" className="h-[14px] w-[14px]" fill="none" stroke="#555" strokeDasharray="1 1">
            <path d="M0 .5h14M0 6.5h14M0 13.5h14M.5 0v14M6.5 0v14M13.5 0v14" />
          </svg>
        </ToolButton>
        <ToolCaret />
        <ToolButton label="增加小数位数">
          <span className="flex flex-col text-[9px] leading-[9px]"><span><span className="text-[#3f6fae]">←</span>.0</span><span className="text-right">.00</span></span>
        </ToolButton>
        <ToolButton label="减少小数位数">
          <span className="flex flex-col text-[9px] leading-[9px]"><span className="text-right">.00</span><span><span className="text-[#3f6fae]">→</span>.0</span></span>
        </ToolButton>
        <ToolButton label="格式刷">
          <svg viewBox="0 0 16 16" className="h-4 w-4">
            <path d="M1 9l5-3 4 4-4 5c-2-1-4-3-5-6z" fill="#e9bd80" />
            <path d="M6 5l2-1.5 5 5L11 10z" fill="#666" />
            <path d="M9.5 5.5L14 1l1.5 1.5-4 4.5z" fill="#666" />
          </svg>
        </ToolButton>
      </div>
    </div>
  );
}

function Callouts() {
  return (
    <svg viewBox="0 0 959 1009" className="pointer-events-none absolute top-0 left-0 h-[1009px] w-[959px]" fill="#ed1c24">
      <path d="M291 435L401 304l-7-2 21-11-7 22-3-6L293 436z" />
      <path d="M378 617L471 494l-5-5 20-7-5 22-4-5L380 618z" />
      <path d="M442 800L638 733l-4-6 25 4-19 15 0-6L443 802z" />
      <g className="font-['Open_Sans',sans-serif] text-[28px] font-semibold" textAnchor="middle">
        <text x="281" y="459">1</text>
        <text x="366" y="641">2</text>
        <text x="426" y="826">3</text>
      </g>
    </svg>
  );
}

export default function App() {
  return (
    <div className="relative flex min-h-screen w-full flex-col overflow-hidden bg-[#e6e6e6] font-['Open_Sans','Noto_Sans_CJK_SC',sans-serif] text-xs">
      <Header />
      <div className="flex flex-1 flex-col border-l border-[#217346]">
        <Ribbon />
        <FormulaBar />
        <div className="flex flex-1">
          <div className="flex min-w-0 flex-1 flex-col">
            <div className="flex flex-1 pt-[10px]">
              <Sheet />
              <div className="mr-1 ml-[3px] flex w-[14px] shrink-0 flex-col bg-[#d0d0d0]">
                <div className="flex-1 border border-[#ababab] bg-white" />
                <div className="h-[23px]" />
                <button aria-label="向下滚动" className="flex h-[14px] items-center justify-center border border-[#ababab] bg-white"><Caret /></button>
              </div>
            </div>
            <SheetTabs />
          </div>
          <FieldPane />
        </div>
      </div>

      <p className="absolute top-[938px] left-[378px] text-[50px] leading-[56px] font-black whitespace-nowrap text-[#217346]/70">无非课堂</p>
      <p className="absolute top-[957px] left-[739px] text-[27px] leading-8 whitespace-nowrap text-white [text-shadow:1px_1px_0_#111,2px_2px_0_#111]">
        <span className="text-2xl font-bold">头条</span> @无非Excel
      </p>

      <MiniToolbar />
      <div className="absolute top-[275px] left-[474px] w-[188px] border border-[#c6c6c6] bg-white p-px shadow-md">
        <MenuList items={contextItems} />
      </div>
      <div className="absolute top-[460px] left-[660px] w-[217px] border border-[#c6c6c6] bg-white p-px shadow-md">
        <MenuList items={showAs} />
      </div>
      <Callouts />
    </div>
  );
}
